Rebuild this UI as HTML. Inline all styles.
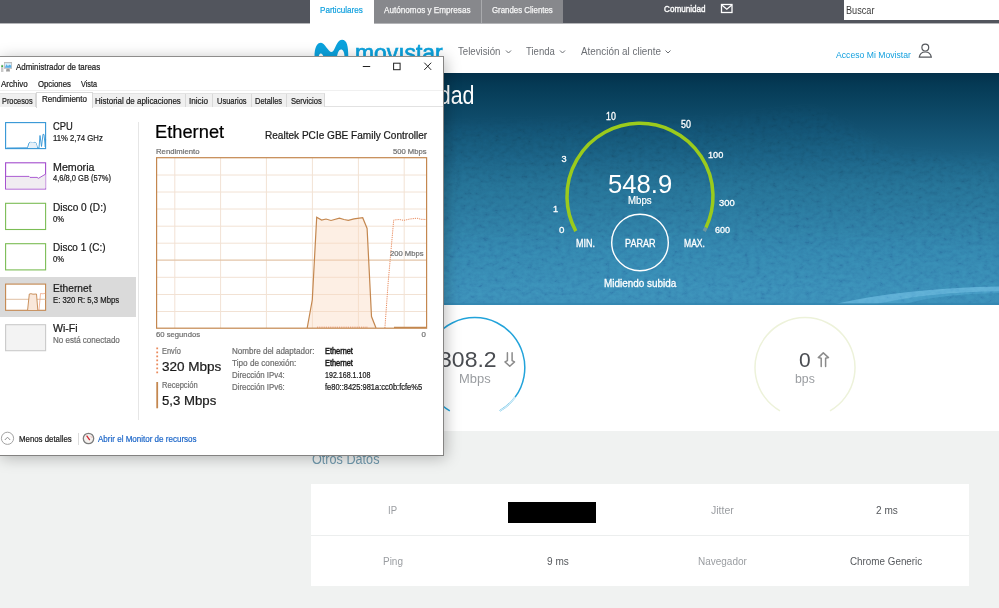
<!DOCTYPE html>
<html><head><meta charset="utf-8">
<style>
html,body{margin:0;padding:0}
body{width:999px;height:608px;overflow:hidden;position:relative;background:#f0f2f1;font-family:"Liberation Sans",sans-serif}
.a{position:absolute}
.t{position:absolute;white-space:nowrap;line-height:1;transform-origin:0 0}
.tm{-webkit-text-stroke:0.22px currentColor}
svg{position:absolute;left:0;top:0;overflow:visible}
</style></head><body>
<!-- top bar -->
<div class="a" style="left:0;top:0;width:999px;height:23px;background:#52555d"></div>
<div class="a" style="left:0;top:23px;width:999px;height:1px;background:#b4b5b8"></div>
<div class="a" style="left:310px;top:0;width:64px;height:24px;background:#fff"></div>
<div class="a" style="left:374px;top:0;width:108px;height:23px;background:#87888c"></div>
<div class="a" style="left:481px;top:0;width:1px;height:23px;background:#a9aaad"></div>
<div class="a" style="left:482px;top:0;width:81px;height:23px;background:#87888c"></div>
<div class="a" style="left:844px;top:0;width:155px;height:20px;background:#fff"></div>
<!-- header -->
<div class="a" style="left:0;top:24px;width:999px;height:49px;background:#fff"></div>
<!-- hero -->
<div class="a" style="left:0;top:73px;width:999px;height:232px;background:linear-gradient(180deg,#03304a 0%,#053a55 5%,#0f4c6b 20%,#185c7e 33%,#246f93 48%,#2d7ba3 66%,#3283ad 76%,#388ab5 92%,#3a8cb7 100%)"></div>
<svg width="999" height="608" viewBox="0 0 999 608">
  <defs><filter id="bl" x="-10%" y="-10%" width="120%" height="120%"><feGaussianBlur stdDeviation="6"/></filter></defs>
  <filter id="nz" x="0" y="0" width="100%" height="100%"><feTurbulence type="fractalNoise" baseFrequency="0.12 0.12" numOctaves="3" seed="7"/><feColorMatrix type="matrix" values="0 0 0 0 0.12  0 0 0 0 0.32  0 0 0 0 0.45  0 0 0 -1.4 0.85"/></filter><linearGradient id="fg" x1="0" y1="0" x2="0" y2="1"><stop offset="0" stop-color="#fff" stop-opacity="0"/><stop offset="0.45" stop-color="#fff" stop-opacity="0.7"/><stop offset="1" stop-color="#fff" stop-opacity="1"/></linearGradient><mask id="fm"><rect x="0" y="110" width="999" height="194" fill="url(#fg)"/></mask>
  
    <path d="M835 304 Q905 288 999 286.5 L999 291.5 Q930 292 878 304 Z" fill="#62b2d9" fill-opacity="0.85"/>
  <path d="M875 304 Q930 292 999 291.5 L999 293 Q940 294 905 304 Z" fill="#4fa3cd" fill-opacity="0.6"/>
</svg>
<svg width="999" height="608" viewBox="0 0 999 608" style="mix-blend-mode:overlay;opacity:0.1">
  <defs><filter id="nz2" x="0" y="0" width="100%" height="100%"><feTurbulence type="fractalNoise" baseFrequency="0.18 0.24" numOctaves="3" seed="11"/><feColorMatrix type="matrix" values="1.6 0 0 0 -0.3  1.6 0 0 0 -0.3  1.6 0 0 0 -0.3  0 0 0 0 1"/></filter>
  <filter id="mb" x="-5%" y="-20%" width="110%" height="140%"><feGaussianBlur stdDeviation="5"/></filter>
  <linearGradient id="fg2" x1="0" y1="0" x2="0" y2="1"><stop offset="0" stop-color="#fff" stop-opacity="0.55"/><stop offset="1" stop-color="#fff" stop-opacity="1"/></linearGradient>
  <mask id="fm2"><path d="M300 130 L560 122 L700 122 L814 109 L898 153 L999 160 L999 304 L300 304 Z" fill="url(#fg2)" filter="url(#mb)"/></mask></defs>
  <g mask="url(#fm2)"><rect x="0" y="90" width="999" height="215" filter="url(#nz2)"/></g>
</svg>
<!-- white section -->
<div class="a" style="left:0;top:303px;width:999px;height:2px;background:#3183ae;opacity:0.6"></div>
<div class="a" style="left:0;top:305px;width:999px;height:126px;background:#fff"></div>
<!-- table -->
<div class="a" style="left:311px;top:484px;width:658px;height:102px;background:#fff"></div>
<div class="a" style="left:311px;top:535px;width:658px;height:1px;background:#eceeee"></div>
<div class="a" style="left:508px;top:502px;width:88px;height:21px;background:#000"></div>
<svg width="999" height="608" viewBox="0 0 999 608">
  <!-- mail icon -->
  <rect x="721.5" y="4.5" width="10.5" height="8" fill="none" stroke="#fff" stroke-width="1.3"/>
  <path d="M721.8 5 L726.8 9.3 L731.8 5" fill="none" stroke="#fff" stroke-width="1.2"/>
  <!-- movistar M -->
  <path d="M314.5 57 C314.5 47 317 42.7 321 42.7 C325 42.7 328 52 331.6 52 C335 52 336 39.7 342 39.7 C347 39.7 348.3 46 348.3 57 L344.5 57 C344.5 52 343 49.5 341 49.5 C339 49.5 337.5 53 337 57 L323.5 57 C323 55 322 53.5 320.8 53.5 C319.5 53.5 319 55 318.7 57 Z" fill="#0ba2dd"/>
  <!-- nav chevrons -->
  <path d="M506 50.5 L508.5 53 L511 50.5" fill="none" stroke="#6b6e73" stroke-width="1"/>
  <path d="M560 50.5 L562.5 53 L565 50.5" fill="none" stroke="#6b6e73" stroke-width="1"/>
  <path d="M665.5 50.5 L668 53 L670.5 50.5" fill="none" stroke="#6b6e73" stroke-width="1"/>
  <!-- user icon -->
  <circle cx="925.3" cy="47.6" r="3.4" fill="none" stroke="#55585d" stroke-width="1.2"/>
  <path d="M919.3 57.2 C919.8 53.5 922 52 925.3 52 C928.6 52 930.8 53.5 931.3 57.2 Z" fill="none" stroke="#55585d" stroke-width="1.2"/>
  <!-- gauge -->
  <path d="M575.8 231.1 A73 73 0 1 1 705.9 227.7" fill="none" stroke="#9bcb1c" stroke-width="3.5"/>
  <path d="M705.9 227.7 A73 73 0 0 1 704.2 231.1" fill="none" stroke="#6f97a0" stroke-width="3.5"/>
  <circle cx="640" cy="242.5" r="28.3" fill="none" stroke="#fff" stroke-width="1.4"/>
  <!-- rings -->
  <path d="M499.8 410.9 A50 50 0 1 0 449.8 410.9" fill="none" stroke="#22a3da" stroke-width="1.5"/>
  <path d="M515.3 397 A50 50 0 0 1 499.8 410.9" fill="none" stroke="#d3edf8" stroke-width="1.4"/>
  <path d="M830 410.9 A50 50 0 1 0 780 410.9" fill="none" stroke="#edf2da" stroke-width="1.5"/>
  <!-- arrows -->
  <path d="M507.4 352.8 L507.4 360.6 L505 361.9 L509.75 366.2 L514.5 361.9 L512.1 360.6 L512.1 352.8" fill="none" stroke="#8b8b8b" stroke-width="1.5" stroke-linejoin="round" stroke-linecap="round"/>
  <path d="M821.2 366.4 L821.2 358.3 L818.3 357.6 L823.3 352.9 L828.5 357.6 L825.6 358.3 L825.6 366.4" fill="none" stroke="#8b8b8b" stroke-width="1.5" stroke-linejoin="round" stroke-linecap="round"/>
</svg>
<div class="t" style="left:319.80px;top:6.00px;font-size:9.01px;color:#11a0de;transform:scaleX(0.900);-webkit-text-stroke:0.2px #11a0de">Particulares</div>
<div class="t" style="left:384.00px;top:6.00px;font-size:9.01px;color:#f6f6f6;transform:scaleX(0.906);-webkit-text-stroke:0.25px #f6f6f6">Autónomos y Empresas</div>
<div class="t" style="left:492.40px;top:6.00px;font-size:9.01px;color:#f6f6f6;transform:scaleX(0.874);-webkit-text-stroke:0.25px #f6f6f6">Grandes Clientes</div>
<div class="t" style="left:664.00px;top:5.00px;font-size:9.16px;color:#ffffff;transform:scaleX(0.889);-webkit-text-stroke:0.35px #ffffff">Comunidad</div>
<div class="t" style="left:846.00px;top:5.00px;font-size:11.19px;color:#3a3a3a;transform:scaleX(0.818)">Buscar</div>
<div class="t" style="left:458.00px;top:45.00px;font-size:11.63px;color:#6b6e73;transform:scaleX(0.831)">Televisión</div>
<div class="t" style="left:525.80px;top:45.00px;font-size:11.63px;color:#6b6e73;transform:scaleX(0.820)">Tienda</div>
<div class="t" style="left:580.50px;top:45.00px;font-size:11.63px;color:#6b6e73;transform:scaleX(0.848)">Atención al cliente</div>
<div class="t" style="left:836.00px;top:50.00px;font-size:9.59px;color:#13a0de;transform:scaleX(0.901)">Acceso Mi Movistar</div>
<div class="t" style="left:355.01px;top:42.00px;font-size:23.00px;color:#0ba2dd;transform:scaleX(0.994);-webkit-text-stroke:0.7px #0ba2dd">movıstar</div>
<div class="t" style="left:309.48px;top:83.00px;font-size:25.50px;color:#ffffff;transform:scaleX(0.840)">Test de velocidad</div>
<div class="t" style="left:559.10px;top:225.00px;font-size:9.74px;color:#ffffff;-webkit-text-stroke:0.3px #ffffff">0</div>
<div class="t" style="left:553.10px;top:205.00px;font-size:9.16px;color:#ffffff;-webkit-text-stroke:0.3px #ffffff">1</div>
<div class="t" style="left:561.60px;top:155.00px;font-size:9.16px;color:#ffffff;-webkit-text-stroke:0.3px #ffffff">3</div>
<div class="t" style="left:605.60px;top:112.00px;font-size:10.03px;color:#ffffff;transform:scaleX(0.882);-webkit-text-stroke:0.3px #ffffff">10</div>
<div class="t" style="left:680.60px;top:120.00px;font-size:10.17px;color:#ffffff;transform:scaleX(0.876);-webkit-text-stroke:0.3px #ffffff">50</div>
<div class="t" style="left:708.00px;top:150.00px;font-size:9.59px;color:#ffffff;transform:scaleX(0.958);-webkit-text-stroke:0.3px #ffffff">100</div>
<div class="t" style="left:718.80px;top:199.00px;font-size:9.30px;color:#ffffff;transform:scaleX(1.010);-webkit-text-stroke:0.3px #ffffff">300</div>
<div class="t" style="left:714.50px;top:225.00px;font-size:9.74px;color:#ffffff;transform:scaleX(0.922);-webkit-text-stroke:0.3px #ffffff">600</div>
<div class="t" style="left:607.62px;top:171.00px;font-size:26.16px;color:#ffffff;transform:scaleX(0.980)">548.9</div>
<div class="t" style="left:628.20px;top:196.00px;font-size:10.03px;color:#ffffff;transform:scaleX(0.964);-webkit-text-stroke:0.2px #ffffff">Mbps</div>
<div class="t" style="left:576.10px;top:239.00px;font-size:10.03px;color:#ffffff;transform:scaleX(0.894);-webkit-text-stroke:0.3px #ffffff">MIN.</div>
<div class="t" style="left:683.70px;top:239.00px;font-size:10.03px;color:#ffffff;transform:scaleX(0.856);-webkit-text-stroke:0.3px #ffffff">MAX.</div>
<div class="t" style="left:624.60px;top:238.00px;font-size:10.76px;color:#ffffff;transform:scaleX(0.844);-webkit-text-stroke:0.3px #ffffff">PARAR</div>
<div class="t" style="left:603.60px;top:278.00px;font-size:10.90px;color:#ffffff;transform:scaleX(0.911);-webkit-text-stroke:0.3px #ffffff">Midiendo subida</div>
<div class="t" style="left:438.80px;top:349.00px;font-size:21.80px;color:#4a4d52;transform:scaleX(1.057)">308.2</div>
<div class="t" style="left:458.53px;top:372.00px;font-size:13.37px;color:#9a9da1;transform:scaleX(0.969)">Mbps</div>
<div class="t" style="left:799.40px;top:350.00px;font-size:20.78px;color:#4a4d52;transform:scaleX(1.009)">0</div>
<div class="t" style="left:795.10px;top:372.00px;font-size:13.37px;color:#9a9da1;transform:scaleX(0.919)">bps</div>
<div class="t" style="left:311.80px;top:452.00px;font-size:14.53px;color:#7099ad;transform:scaleX(0.871)">Otros Datos</div>
<div class="t" style="left:387.98px;top:504.00px;font-size:11.63px;color:#9a9da1;transform:scaleX(0.821)">IP</div>
<div class="t" style="left:710.55px;top:504.00px;font-size:11.63px;color:#9a9da1;transform:scaleX(0.905)">Jitter</div>
<div class="t" style="left:875.55px;top:504.00px;font-size:11.63px;color:#55585c;transform:scaleX(0.864)">2 ms</div>
<div class="t" style="left:383.25px;top:555.00px;font-size:11.63px;color:#9a9da1;transform:scaleX(0.856)">Ping</div>
<div class="t" style="left:546.55px;top:555.00px;font-size:11.63px;color:#55585c;transform:scaleX(0.864)">9 ms</div>
<div class="t" style="left:697.55px;top:555.00px;font-size:11.63px;color:#9a9da1;transform:scaleX(0.859)">Navegador</div>
<div class="t" style="left:850.35px;top:555.00px;font-size:11.63px;color:#55585c;transform:scaleX(0.847)">Chrome Generic</div>

<!-- ============ TASK MANAGER ============ -->
<div class="a" style="left:-1px;top:56px;width:443px;height:398px;background:#fff;border:1px solid #8e8d8c;border-bottom-color:#838281;border-right-color:#858483;box-shadow:2px 2px 14px rgba(0,0,0,0.26)"></div>
<!-- menu/tab separators -->
<div class="a" style="left:0;top:90px;width:443px;height:1px;background:#f0f0f0"></div>
<div class="a" style="left:0;top:106px;width:443px;height:1px;background:#e2e2e2"></div>
<!-- tabs -->
<div class="a" style="left:0;top:93px;width:35px;height:13px;background:#f0f0f0;border-right:1px solid #d9d9d9;border-top:1px solid #e3e3e3"></div>
<div class="a" style="left:92px;top:93px;width:232px;height:13px;background:#f0f0f0;border-top:1px solid #e3e3e3;border-right:1px solid #d9d9d9"></div>
<div class="a" style="left:185px;top:94px;width:1px;height:13px;background:#d9d9d9"></div>
<div class="a" style="left:212px;top:94px;width:1px;height:13px;background:#d9d9d9"></div>
<div class="a" style="left:251px;top:94px;width:1px;height:13px;background:#d9d9d9"></div>
<div class="a" style="left:286px;top:94px;width:1px;height:13px;background:#d9d9d9"></div>
<div class="a" style="left:36px;top:92px;width:55px;height:15px;background:#fff;border:1px solid #d9d9d9;border-bottom:none"></div>
<!-- sidebar selection -->
<div class="a" style="left:0;top:277px;width:136px;height:40px;background:#dadada"></div>
<div class="a" style="left:138px;top:122px;width:1px;height:298px;background:#e6e6e6"></div>
<div class="a" style="left:77.5px;top:433px;width:1px;height:12px;background:#dcdcdc"></div>
<svg width="999" height="608" viewBox="0 0 999 608">
  <!-- title bar buttons -->
  <path d="M362.8 66.5 H370.2" stroke="#222" stroke-width="1"/>
  <rect x="393.6" y="63.2" width="6.5" height="6.5" fill="none" stroke="#222" stroke-width="1"/>
  <path d="M424.3 62.7 L431.2 69.9 M431.2 62.7 L424.3 69.9" stroke="#222" stroke-width="1"/>
  <!-- app icon -->
  <rect x="1" y="64.8" width="2.4" height="7.2" fill="#c9c9c9"/>
  <circle cx="2.2" cy="66.2" r="0.9" fill="#38b53a"/>
  <rect x="4" y="62" width="8" height="6.8" fill="#bdbdbd"/>
  <rect x="4.8" y="63.2" width="6.4" height="4.6" fill="#d8f0fc"/>
  <path d="M4.8 67.8 L6.5 64.2 L7.8 66 L9.5 64.8 L11.2 65.5 L11.2 67.8 Z" fill="#5aaee6"/>
  <path d="M6.5 68.8 L9.5 68.8 L10 71.5 L6 71.5 Z" fill="#9d9d9d"/>
  <!-- sidebar boxes -->
  <rect x="5.6" y="122.6" width="40" height="26" fill="#fff" stroke="#3496d6" stroke-width="1.1"/>
  <path d="M6.5 148 L27.5 147.8 L29 143 L30 142.3 L32 142.5 L33 143.2 L34 142.3 L36 142.8 L37.5 148 L39 148 L40 135.5 L41.5 146.5 L43 134.3 L44 134.5 L45.3 147 L45.6 139" fill="none" stroke="#3496d6" stroke-width="0.9"/>
  <path d="M29 148 L30 142.3 L36 142.8 L37.2 148 Z" fill="#e6f0f8"/>
  <rect x="5.6" y="162.8" width="40" height="26.2" fill="#fff" stroke="#a34ccd" stroke-width="1.1"/>
  <path d="M6 176.4 L29 176.4 L30 177.4 L37 177.4 L38.5 178.3 L45.6 174.1 L45.6 188.6 L6 188.6 Z" fill="#f0ecf1" stroke="none"/>
  <path d="M6 176.4 L29 176.4 L30 177.4 L37 177.4 L38.5 178.3 L45.6 174.1" fill="none" stroke="#a34ccd" stroke-width="0.9"/>
  <rect x="5.6" y="203.3" width="40" height="26.2" fill="#fff" stroke="#7bbd55" stroke-width="1.1"/>
  <rect x="5.6" y="243.7" width="40" height="26.2" fill="#fff" stroke="#7bbd55" stroke-width="1.1"/>
  <rect x="5.6" y="284.1" width="40" height="26.2" fill="#fff" stroke="#c4874f" stroke-width="1.1"/>
  <path d="M6 299.3 H45.6" stroke="#dcb899" stroke-width="0.9"/>
  <path d="M27.6 310 L29.3 294 L36.5 294 L37.8 310 Z" fill="#f9e8db"/>
  <path d="M27.6 310 L29.3 294 L31 293.7 L33 294.2 L36.5 294 L37.8 310" fill="none" stroke="#c4874f" stroke-width="0.9"/>
  <path d="M39 310 L40.5 293.5 L43 293.8 L45.5 293.2" fill="none" stroke="#ec9b76" stroke-width="0.7"/>
  <rect x="5.6" y="324.7" width="40" height="26" fill="#f3f3f3" stroke="#cacaca" stroke-width="1.1"/>
  <!-- main graph -->
  <g stroke="#f2e2d4" stroke-width="1">
    <path d="M156.5 175 H426.5 M156.5 192 H426.5 M156.5 209 H426.5 M156.5 226.2 H426.5 M156.5 243.2 H426.5 M156.5 277.3 H426.5 M156.5 294.5 H426.5 M156.5 311.5 H426.5"/>
    <path d="M174.8 158 V328 M220.6 158 V328 M266.4 158 V328 M312.4 158 V328 M358.4 158 V328 M404.2 158 V328"/>
  </g>
  <path d="M156.5 260.2 H426.5" stroke="#e3c5a8" stroke-width="1.3"/>
  <path d="M307.2 328 L312.3 299.8 L316.7 217.3 L321.6 220 L326 219 L331 220.5 L339.4 218.2 L344 219.5 L348.3 220.4 L354 218.8 L362.7 217.7 L367.1 228.4 L371.5 316.5 L376 328 Z" fill="#fad9bf" fill-opacity="0.42"/>
  <path d="M307.2 328 L312.3 299.8 L316.7 217.3 L321.6 220 L326 219 L331 220.5 L339.4 218.2 L344 219.5 L348.3 220.4 L354 218.8 L362.7 217.7 L367.1 228.4 L371.5 316.5 L376 328" fill="none" stroke="#c4874f" stroke-width="1.2"/>
  <path d="M384.9 328 L388.2 282 L393.7 220 L399.3 219.5 L403.7 220.4 L410 219 L417 218.2 L421 219.3 L426.5 219.5" fill="none" stroke="#ea8a5c" stroke-width="1" stroke-dasharray="1.2 1"/>
  <path d="M317 327.2 H368" fill="none" stroke="#ea8a5c" stroke-width="0.9" stroke-dasharray="1.2 1"/>
  <path d="M394 327.3 H426.5" fill="none" stroke="#c4874f" stroke-width="1.2"/>
  <rect x="156.6" y="157.7" width="270" height="170.5" fill="none" stroke="#c4874f" stroke-width="1.2"/>
  <!-- markers -->
  <path d="M157.2 347.5 V374" stroke="#ea8a5c" stroke-width="1.8" stroke-dasharray="1.8 2.2"/>
  <path d="M157.2 382 V408.3" stroke="#c4874f" stroke-width="1.8"/>
  <!-- footer icons -->
  <circle cx="7.5" cy="438.3" r="6.1" fill="none" stroke="#a3a3a3" stroke-width="1"/>
  <path d="M4.8 440 L7.5 437.2 L10.2 440" fill="none" stroke="#8f8f8f" stroke-width="1"/>
  <circle cx="88.5" cy="438.5" r="5.2" fill="#f4f1ee" stroke="#7d7d7d" stroke-width="1.3"/>
  <path d="M86.6 435.6 L89.8 440.2" stroke="#d0202a" stroke-width="1.2"/>
  <path d="M91 436.5 L91.8 437.5" stroke="#e07070" stroke-width="0.8"/>
  </svg>
<div class="t tm" style="left:15.60px;top:62.00px;font-size:9.59px;color:#1a1a1a;transform:scaleX(0.828)">Administrador de tareas</div>
<div class="t tm" style="left:1.20px;top:80.00px;font-size:9.01px;color:#1a1a1a;transform:scaleX(0.893)">Archivo</div>
<div class="t tm" style="left:38.00px;top:80.00px;font-size:9.01px;color:#1a1a1a;transform:scaleX(0.864)">Opciones</div>
<div class="t tm" style="left:81.00px;top:80.00px;font-size:9.01px;color:#1a1a1a;transform:scaleX(0.806)">Vista</div>
<div class="t tm" style="left:2.00px;top:97.00px;font-size:9.01px;color:#1a1a1a;transform:scaleX(0.815)">Procesos</div>
<div class="t tm" style="left:41.50px;top:95.00px;font-size:9.01px;color:#1a1a1a;transform:scaleX(0.891)">Rendimiento</div>
<div class="t tm" style="left:95.00px;top:97.00px;font-size:9.01px;color:#1a1a1a;transform:scaleX(0.884)">Historial de aplicaciones</div>
<div class="t tm" style="left:189.20px;top:97.00px;font-size:9.01px;color:#1a1a1a;transform:scaleX(0.905)">Inicio</div>
<div class="t tm" style="left:216.80px;top:97.00px;font-size:9.01px;color:#1a1a1a;transform:scaleX(0.833)">Usuarios</div>
<div class="t tm" style="left:255.00px;top:97.00px;font-size:9.01px;color:#1a1a1a;transform:scaleX(0.833)">Detalles</div>
<div class="t tm" style="left:290.80px;top:97.00px;font-size:9.01px;color:#1a1a1a;transform:scaleX(0.843)">Servicios</div>
<div class="t tm" style="left:52.80px;top:122.00px;font-size:10.03px;color:#1a1a1a;transform:scaleX(0.937)">CPU</div>
<div class="t tm" style="left:52.80px;top:134.00px;font-size:8.58px;color:#1a1a1a;transform:scaleX(0.902)">11% 2,74 GHz</div>
<div class="t tm" style="left:52.80px;top:163.00px;font-size:10.03px;color:#1a1a1a;transform:scaleX(1.064)">Memoria</div>
<div class="t tm" style="left:52.80px;top:174.00px;font-size:8.58px;color:#1a1a1a;transform:scaleX(0.875)">4,6/8,0 GB (57%)</div>
<div class="t tm" style="left:52.80px;top:203.00px;font-size:10.03px;color:#1a1a1a;transform:scaleX(1.009)">Disco 0 (D:)</div>
<div class="t tm" style="left:52.80px;top:215.00px;font-size:8.58px;color:#1a1a1a;transform:scaleX(0.893)">0%</div>
<div class="t tm" style="left:52.80px;top:243.00px;font-size:10.03px;color:#1a1a1a;transform:scaleX(0.994)">Disco 1 (C:)</div>
<div class="t tm" style="left:52.80px;top:255.00px;font-size:8.58px;color:#1a1a1a;transform:scaleX(0.893)">0%</div>
<div class="t tm" style="left:52.80px;top:284.00px;font-size:10.03px;color:#1a1a1a;transform:scaleX(1.016)">Ethernet</div>
<div class="t tm" style="left:52.80px;top:296.00px;font-size:8.58px;color:#1a1a1a;transform:scaleX(0.900)">E: 320 R: 5,3 Mbps</div>
<div class="t tm" style="left:52.80px;top:324.00px;font-size:10.03px;color:#1a1a1a;transform:scaleX(1.055)">Wi-Fi</div>
<div class="t tm" style="left:52.80px;top:336.00px;font-size:8.58px;color:#707070;transform:scaleX(0.934)">No está conectado</div>
<div class="t tm" style="left:154.83px;top:123.00px;font-size:18.90px;color:#000000;transform:scaleX(0.968)">Ethernet</div>
<div class="t tm" style="left:264.50px;top:130.00px;font-size:10.76px;color:#1a1a1a;transform:scaleX(0.936)">Realtek PCIe GBE Family Controller</div>
<div class="t tm" style="left:156.30px;top:148.00px;font-size:7.85px;color:#707070;transform:scaleX(0.987)">Rendimiento</div>
<div class="t tm" style="left:393.30px;top:148.00px;font-size:7.85px;color:#707070;transform:scaleX(0.972)">500 Mbps</div>
<div class="t tm" style="left:390.30px;top:250.00px;font-size:7.85px;color:#707070;transform:scaleX(0.972)">200 Mbps</div>
<div class="t tm" style="left:156.30px;top:331.00px;font-size:7.85px;color:#707070;transform:scaleX(0.980)">60 segundos</div>
<div class="t tm" style="left:421.50px;top:331.00px;font-size:7.85px;color:#707070">0</div>
<div class="t tm" style="left:162.00px;top:347.00px;font-size:8.72px;color:#707070;transform:scaleX(0.846)">Envío</div>
<div class="t tm" style="left:162.00px;top:361.00px;font-size:12.50px;color:#1a1a1a;transform:scaleX(1.080)">320 Mbps</div>
<div class="t tm" style="left:162.00px;top:381.00px;font-size:8.43px;color:#707070;transform:scaleX(0.898)">Recepción</div>
<div class="t tm" style="left:162.00px;top:395.00px;font-size:12.50px;color:#1a1a1a;transform:scaleX(1.055)">5,3 Mbps</div>
<div class="t tm" style="left:232.00px;top:348.00px;font-size:8.14px;color:#707070;transform:scaleX(0.992)">Nombre del adaptador:</div>
<div class="t tm" style="left:324.60px;top:348.00px;font-size:8.14px;color:#1a1a1a;transform:scaleX(0.909);-webkit-text-stroke:0.45px #1a1a1a">Ethernet</div>
<div class="t tm" style="left:232.00px;top:360.00px;font-size:8.14px;color:#707070;transform:scaleX(1.007)">Tipo de conexión:</div>
<div class="t tm" style="left:324.60px;top:360.00px;font-size:8.14px;color:#1a1a1a;transform:scaleX(0.909);-webkit-text-stroke:0.45px #1a1a1a">Ethernet</div>
<div class="t tm" style="left:232.00px;top:372.00px;font-size:8.14px;color:#707070;transform:scaleX(0.965)">Dirección IPv4:</div>
<div class="t tm" style="left:324.60px;top:372.00px;font-size:8.14px;color:#1a1a1a;transform:scaleX(0.873)">192.168.1.108</div>
<div class="t tm" style="left:232.00px;top:384.00px;font-size:8.14px;color:#707070;transform:scaleX(0.965)">Dirección IPv6:</div>
<div class="t tm" style="left:324.60px;top:384.00px;font-size:8.14px;color:#1a1a1a;transform:scaleX(0.922)">fe80::8425:981a:cc0b:fcfe%5</div>
<div class="t tm" style="left:18.90px;top:435.00px;font-size:9.30px;color:#1a1a1a;transform:scaleX(0.843)">Menos detalles</div>
<div class="t tm" style="left:97.70px;top:435.00px;font-size:9.30px;color:#1c66c8;transform:scaleX(0.863)">Abrir el Monitor de recursos</div>
</body></html>
